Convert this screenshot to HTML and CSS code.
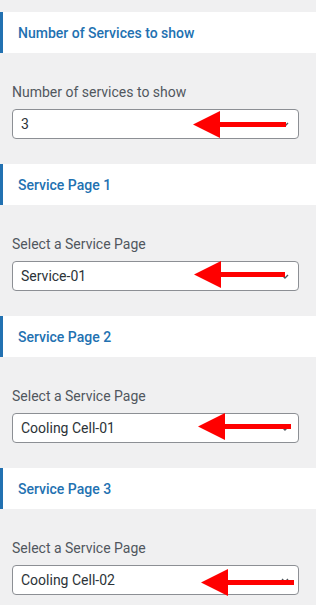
FILE: index.html
```html
<!DOCTYPE html>
<html lang="en">
<head>
    <meta charset="UTF-8">
    <meta name="viewport" content="width=device-width, initial-scale=1.0">
    <title>Services Section</title>
    <link rel="stylesheet" href="styles.css">
</head>
<body>
    <div class="section">
        <h3 class="section-title">Number of Services to show</h3>
        <div class="field">
            <label class="field-label">Number of services to show</label>
            <div class="select">
                <span>3</span>
                <svg class="chevron" width="8" height="5" viewBox="0 0 8 5"><path d="M1 1l3 3 3-3" fill="none" stroke="#50575e" stroke-width="1.4"/></svg>
                <svg class="arrow arrow-1" width="93" height="27" viewBox="0 0 93 27"><polygon points="0,13.5 27,0 27,27" fill="#f00"/><rect x="26" y="11" width="67" height="5" fill="#f00"/></svg>
            </div>
        </div>
    </div>

    <div class="section">
        <h3 class="section-title">Service Page 1</h3>
        <div class="field">
            <label class="field-label">Select a Service Page</label>
            <div class="select">
                <span>Service-01</span>
                <svg class="chevron" width="8" height="5" viewBox="0 0 8 5"><path d="M1 1l3 3 3-3" fill="none" stroke="#50575e" stroke-width="1.4"/></svg>
                <svg class="arrow arrow-2" width="91" height="27" viewBox="0 0 91 27"><polygon points="0,13.5 27,0 27,27" fill="#f00"/><rect x="26" y="11" width="65" height="5" fill="#f00"/></svg>
            </div>
        </div>
    </div>

    <div class="section">
        <h3 class="section-title">Service Page 2</h3>
        <div class="field">
            <label class="field-label">Select a Service Page</label>
            <div class="select">
                <span>Cooling Cell-01</span>
                <svg class="chevron" width="8" height="5" viewBox="0 0 8 5"><path d="M1 1l3 3 3-3" fill="none" stroke="#50575e" stroke-width="1.4"/></svg>
                <svg class="arrow arrow-3" width="93" height="27" viewBox="0 0 93 27"><polygon points="0,13.5 27,0 27,27" fill="#f00"/><rect x="26" y="11" width="67" height="5" fill="#f00"/></svg>
            </div>
        </div>
    </div>

    <div class="section">
        <h3 class="section-title">Service Page 3</h3>
        <div class="field">
            <label class="field-label">Select a Service Page</label>
            <div class="select">
                <span>Cooling Cell-02</span>
                <svg class="chevron" width="8" height="5" viewBox="0 0 8 5"><path d="M1 1l3 3 3-3" fill="none" stroke="#50575e" stroke-width="1.4"/></svg>
                <svg class="arrow arrow-4" width="93" height="27" viewBox="0 0 93 27"><polygon points="0,13.5 27,0 27,27" fill="#f00"/><rect x="26" y="11" width="67" height="5" fill="#f00"/></svg>
            </div>
        </div>
    </div>
</body>
</html>
```

FILE: styles.css
```css
body {
    background-color: #f0f0f1; /* customizer grey */
    font-family: Roboto, "Liberation Sans", sans-serif;
    margin: 0;
    overflow: hidden;
}
.section {
    padding-top: 12px;
}
.section-title {
    margin: 0;
    height: 41px;
    display: flex;
    align-items: center;
    padding-left: 15px;
    background-color: #fff;
    border-left: 3px solid #2271b1; /* accent bar */
    box-sizing: border-box;
    color: #2271b1;
    font-size: 14px;
    font-weight: 500;
}
.field {
    padding: 29px 12px 13px 12px;
    width: 287px;
}
.field-label {
    display: block;
    line-height: 20px;
    font-size: 14px;
    color: #50575e;
    margin-bottom: 7px;
}
.select {
    position: relative;
    display: flex;
    align-items: center;
    justify-content: space-between;
    height: 30px;
    box-sizing: border-box;
    padding: 0 9px 0 8px;
    background-color: #fff;
    border: 1px solid #8c8f94;
    border-radius: 4px;
    font-size: 14px;
    color: #2c3338;
}
/* red annotation arrows lie over the dropdowns */
.arrow {
    position: absolute;
}
.arrow-1 { left: 180px; top: 1px; }
.arrow-2 { left: 181px; top: -1px; }
.arrow-3 { left: 185px; top: -1px; }
.arrow-4 { left: 188px; top: 3px; }
```
